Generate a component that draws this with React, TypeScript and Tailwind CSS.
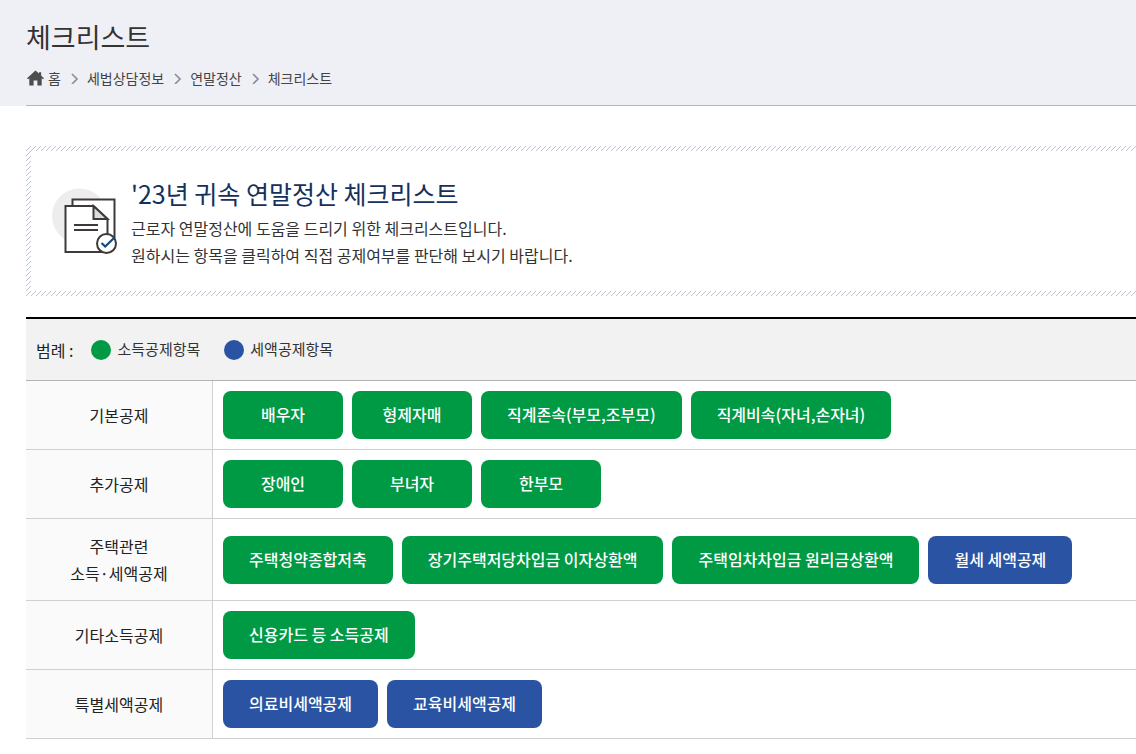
import React from 'react';

type Kind = 'income' | 'tax';

interface ChecklistItem {
  label: string;
  kind: Kind;
}

interface ChecklistRow {
  title: string[];
  items: ChecklistItem[];
}

const rows: ChecklistRow[] = [
  {
    title: ['기본공제'],
    items: [
      { label: '배우자', kind: 'income' },
      { label: '형제자매', kind: 'income' },
      { label: '직계존속(부모,조부모)', kind: 'income' },
      { label: '직계비속(자녀,손자녀)', kind: 'income' },
    ],
  },
  {
    title: ['추가공제'],
    items: [
      { label: '장애인', kind: 'income' },
      { label: '부녀자', kind: 'income' },
      { label: '한부모', kind: 'income' },
    ],
  },
  {
    title: ['주택관련', '소득·세액공제'],
    items: [
      { label: '주택청약종합저축', kind: 'income' },
      { label: '장기주택저당차입금 이자상환액', kind: 'income' },
      { label: '주택임차차입금 원리금상환액', kind: 'income' },
      { label: '월세 세액공제', kind: 'tax' },
    ],
  },
  {
    title: ['기타소득공제'],
    items: [{ label: '신용카드 등 소득공제', kind: 'income' }],
  },
  {
    title: ['특별세액공제'],
    items: [
      { label: '의료비세액공제', kind: 'tax' },
      { label: '교육비세액공제', kind: 'tax' },
    ],
  },
];

const kindColor: Record<Kind, string> = {
  income: 'bg-[#009944]',
  tax: 'bg-[#2a54a3]',
};

const crumbs = ['세법상담정보', '연말정산', '체크리스트'];

const HomeIcon = () => (
  <svg width="18" height="16" viewBox="-1 0 18 16" fill="#4d4d4d" aria-hidden="true">
    <path d="M8.5 0.5 L12 3.6 V2.2 H14.2 V5.7 L17 8.3 L16 9.3 L14.7 8.3 V15.4 H10.4 V10.4 H6.6 V15.4 H2.3 V8.3 L1 9.3 L0 8.3 Z" />
  </svg>
);

const Chevron = () => (
  <svg className="mr-2 ml-2.5" width="8" height="12" viewBox="0 0 8 12" fill="none" stroke="#8a8f99" strokeWidth="1.7" aria-hidden="true">
    <path d="M1 2 L6 7 L1 12" />
  </svg>
);

const DocumentIcon = () => (
  <svg width="68" height="68" viewBox="0 0 68 68" fill="none" aria-hidden="true">
    <circle cx="29.5" cy="29" r="27.5" fill="#ededed" />
    <g stroke="#3e3a39" strokeWidth="2">
      <path d="M22.5 18 V12.5 H64.5 V51" fill="#fff" />
      <path d="M15.5 19 H43.5 L57.5 32 V65 H15.5 Z" fill="#fff" />
      <path d="M43.5 19 V32 H57.5 Z" fill="#dcdcdc" />
      <path d="M24 38 H48 M24 43 H48" />
      <circle cx="56.5" cy="56.5" r="9.5" fill="#fff" />
    </g>
    <path d="M51.5 56 L55.2 59.5 L64 51" stroke="#134a7c" strokeWidth="2.2" />
  </svg>
);

const App: React.FC = () => {
  return (
    <div className="min-h-screen overflow-x-hidden bg-white font-['Noto_Sans_CJK_KR',sans-serif] text-[#222]">
      <header className="bg-[#eff0f5] pl-[26px]">
        <div className="border-b border-[#b4b7bd] pt-[17px] pb-[15px]">
          <h1 className="text-[27px] leading-10 text-[#333]">체크리스트</h1>
          <nav aria-label="breadcrumb" className="mt-2 flex h-[25px] items-center text-sm text-[#444]">
            <a href="#" className="flex items-center gap-1">
              <HomeIcon />홈
            </a>
            {crumbs.map(crumb => (
              <React.Fragment key={crumb}>
                <Chevron />
                <a href="#">{crumb}</a>
              </React.Fragment>
            ))}
          </nav>
        </div>
      </header>

      <main className="pt-10 pl-[26px]">
        {/* hatched frame */}
        <section className="bg-[linear-gradient(135deg,transparent_45%,#bcc4d3_45%,#bcc4d3_55%,transparent_55%)] bg-[size:5px_5px] py-[5px] pl-[5px]">
          <div className="flex h-[140px] items-center gap-[13px] bg-white pl-[19px]">
            <DocumentIcon />
            <div>
              <h2 className="mb-0.5 text-[25px] leading-10 text-[#16305c]">'23년 귀속 연말정산 체크리스트</h2>
              <p className="text-base leading-[27px] text-[#333]">
                근로자 연말정산에 도움을 드리기 위한 체크리스트입니다.
                <br />
                원하시는 항목을 클릭하여 직접 공제여부를 판단해 보시기 바랍니다.
              </p>
            </div>
          </div>
        </section>

        <div className="mt-[21px] flex h-[63px] items-center border-t-2 border-black bg-[#f2f2f2] pl-2.5">
          <strong className="mr-[18px] text-base font-normal">범례 :</strong>
          <ul className="flex gap-6 text-[15px] text-[#333]">
            <li className="flex items-center gap-1.5">
              <span className="size-5 rounded-full bg-[#009944]" />
              소득공제항목
            </li>
            <li className="flex items-center gap-1.5">
              <span className="size-5 rounded-full bg-[#2a54a3]" />
              세액공제항목
            </li>
          </ul>
        </div>

        <table className="w-full border-separate border-spacing-0 border-t border-[#b3b3b3] text-base">
          <tbody>
            {rows.map(row => (
              <tr key={row.title[0]}>
                <th
                  scope="row"
                  className="w-[187px] border-r border-b border-[#d0d0d0] bg-[#fafafa] pt-3.5 pb-[13px] text-center leading-[27px] font-normal"
                >
                  {row.title.map(line => (
                    <span key={line} className="block">
                      {line}
                    </span>
                  ))}
                </th>
                <td className="border-b border-[#d0d0d0] p-2.5">
                  <div className="flex flex-wrap gap-[9px]">
                    {row.items.map(item => (
                      <button
                        key={item.label}
                        type="button"
                        className={`h-12 min-w-[120px] rounded-lg px-[26px] pb-0.5 font-medium text-white ${kindColor[item.kind]}`}
                      >
                        {item.label}
                      </button>
                    ))}
                  </div>
                </td>
              </tr>
            ))}
          </tbody>
        </table>
      </main>
    </div>
  );
};

export default App;
